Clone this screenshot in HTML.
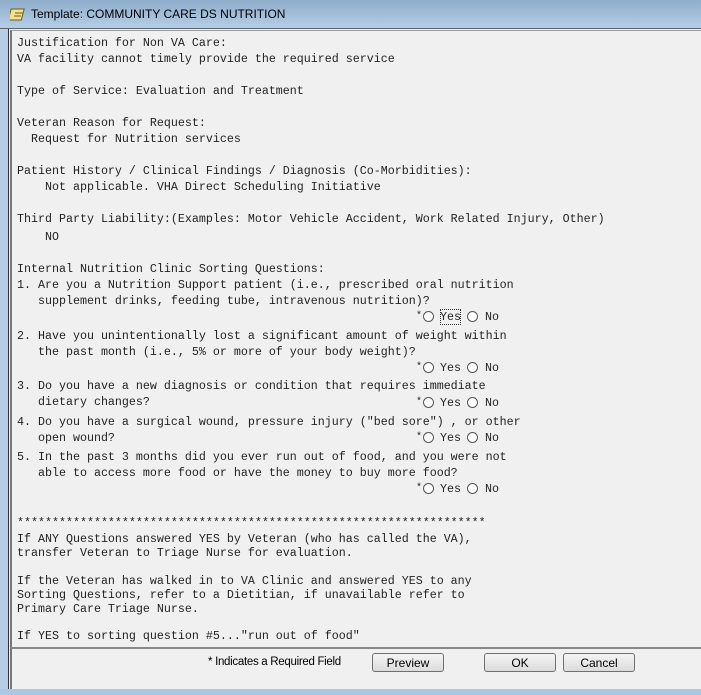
<!DOCTYPE html>
<html><head><style>
body{margin:0;width:701px;height:695px;overflow:hidden;background:#f0f0f0;position:relative;font-family:"Liberation Sans",sans-serif}
#title{position:absolute;left:0;top:0;width:701px;height:28px;background:linear-gradient(#8eaccb,#b5cee6);border-bottom:1px solid #5a6470}
#title span{position:absolute;left:31px;top:7px;font-size:12px;color:#000}
#lb{position:absolute;left:0;top:29px;width:8px;height:666px;background:#b5cee6;border-right:1px solid #333}
#ta{position:absolute;left:10px;top:30px;width:691px;height:616px;background:#f0f0f0;border-left:2px solid #777;border-top:1px solid #999}
.l{position:absolute;left:17px;height:16px;line-height:16px;font-family:"Liberation Mono",monospace;font-size:11.67px;color:#222;white-space:pre}
.r{position:absolute;width:11px;height:11px;border-radius:50%;background:#fff;border:1px solid #555;box-sizing:border-box}
#bot{position:absolute;left:10px;top:647px;width:691px;height:42px;border-top:2px solid #888;border-left:2px solid #777;background:#f0f0f0}
#blue{position:absolute;left:0;top:689px;width:701px;height:6px;background:#a8c8e4}
.btn{position:absolute;top:653px;height:19px;width:72px;border:1px solid #707070;border-radius:3px;background:linear-gradient(#f4f4f4,#dcdcdc);font-size:12px;text-align:center;line-height:19px;box-sizing:border-box}
</style></head><body>
<div id="title"><svg style="position:absolute;left:10px;top:6px" width="18" height="16"><rect x="2" y="3" width="13" height="11" fill="#f4e28a" stroke="#6a5a20" transform="skewX(-15)"/><line x1="5" y1="7" x2="13" y2="7" stroke="#6a5a20"/><line x1="4" y1="10" x2="11" y2="10" stroke="#6a5a20"/></svg><span>Template: COMMUNITY CARE DS NUTRITION</span></div>
<div id="lb"></div>
<div id="ta"></div>
<div class="l" style="top:35px">Justification for Non VA Care:</div>
<div class="l" style="top:51px">VA facility cannot timely provide the required service</div>
<div class="l" style="top:83px">Type of Service: Evaluation and Treatment</div>
<div class="l" style="top:115px">Veteran Reason for Request:</div>
<div class="l" style="top:131px">  Request for Nutrition services</div>
<div class="l" style="top:163px">Patient History / Clinical Findings / Diagnosis (Co-Morbidities):</div>
<div class="l" style="top:179px">    Not applicable. VHA Direct Scheduling Initiative</div>
<div class="l" style="top:211px">Third Party Liability:(Examples: Motor Vehicle Accident, Work Related Injury, Other)</div>
<div class="l" style="top:229px">    NO</div>
<div class="l" style="top:261px">Internal Nutrition Clinic Sorting Questions:</div>
<div class="l" style="top:277px">1. Are you a Nutrition Support patient (i.e., prescribed oral nutrition</div>
<div class="l" style="top:293px">   supplement drinks, feeding tube, intravenous nutrition)?</div>
<div class="l" style="top:328px">2. Have you unintentionally lost a significant amount of weight within</div>
<div class="l" style="top:344px">   the past month (i.e., 5% or more of your body weight)?</div>
<div class="l" style="top:378px">3. Do you have a new diagnosis or condition that requires immediate</div>
<div class="l" style="top:394px">   dietary changes?</div>
<div class="l" style="top:414px">4. Do you have a surgical wound, pressure injury ("bed sore") , or other</div>
<div class="l" style="top:430px">   open wound?</div>
<div class="l" style="top:449px">5. In the past 3 months did you ever run out of food, and you were not</div>
<div class="l" style="top:465px">   able to access more food or have the money to buy more food?</div>
<div class="l" style="top:515px">*******************************************************************</div>
<div class="l" style="top:531px">If ANY Questions answered YES by Veteran (who has called the VA),</div>
<div class="l" style="top:545px">transfer Veteran to Triage Nurse for evaluation.</div>
<div class="l" style="top:573px">If the Veteran has walked in to VA Clinic and answered YES to any</div>
<div class="l" style="top:587px">Sorting Questions, refer to a Dietitian, if unavailable refer to</div>
<div class="l" style="top:601px">Primary Care Triage Nurse.</div>
<div class="l" style="top:628px">If YES to sorting question #5..."run out of food"</div>

<div class="l" style="left:416px;top:309px;font-size:10px">*</div><div class="r" style="left:423px;top:311px"></div><div class="l" style="left:440px;top:309px;outline:1px dotted #333;outline-offset:-1px">Yes</div><div class="r" style="left:467px;top:311px"></div><div class="l" style="left:485px;top:309px">No</div>
<div class="l" style="left:416px;top:360px;font-size:10px">*</div><div class="r" style="left:423px;top:362px"></div><div class="l" style="left:440px;top:360px">Yes</div><div class="r" style="left:467px;top:362px"></div><div class="l" style="left:485px;top:360px">No</div>
<div class="l" style="left:416px;top:395px;font-size:10px">*</div><div class="r" style="left:423px;top:397px"></div><div class="l" style="left:440px;top:395px">Yes</div><div class="r" style="left:467px;top:397px"></div><div class="l" style="left:485px;top:395px">No</div>
<div class="l" style="left:416px;top:430px;font-size:10px">*</div><div class="r" style="left:423px;top:432px"></div><div class="l" style="left:440px;top:430px">Yes</div><div class="r" style="left:467px;top:432px"></div><div class="l" style="left:485px;top:430px">No</div>
<div class="l" style="left:416px;top:481px;font-size:10px">*</div><div class="r" style="left:423px;top:483px"></div><div class="l" style="left:440px;top:481px">Yes</div><div class="r" style="left:467px;top:483px"></div><div class="l" style="left:485px;top:481px">No</div>

<div id="bot"></div>
<div style="position:absolute;left:208px;top:656px;font-size:11.5px;letter-spacing:-0.3px">* Indicates a Required Field</div>
<div class="btn" style="left:372px">Preview</div>
<div class="btn" style="left:484px">OK</div>
<div class="btn" style="left:563px">Cancel</div>
<div id="blue"></div>
</body></html>
